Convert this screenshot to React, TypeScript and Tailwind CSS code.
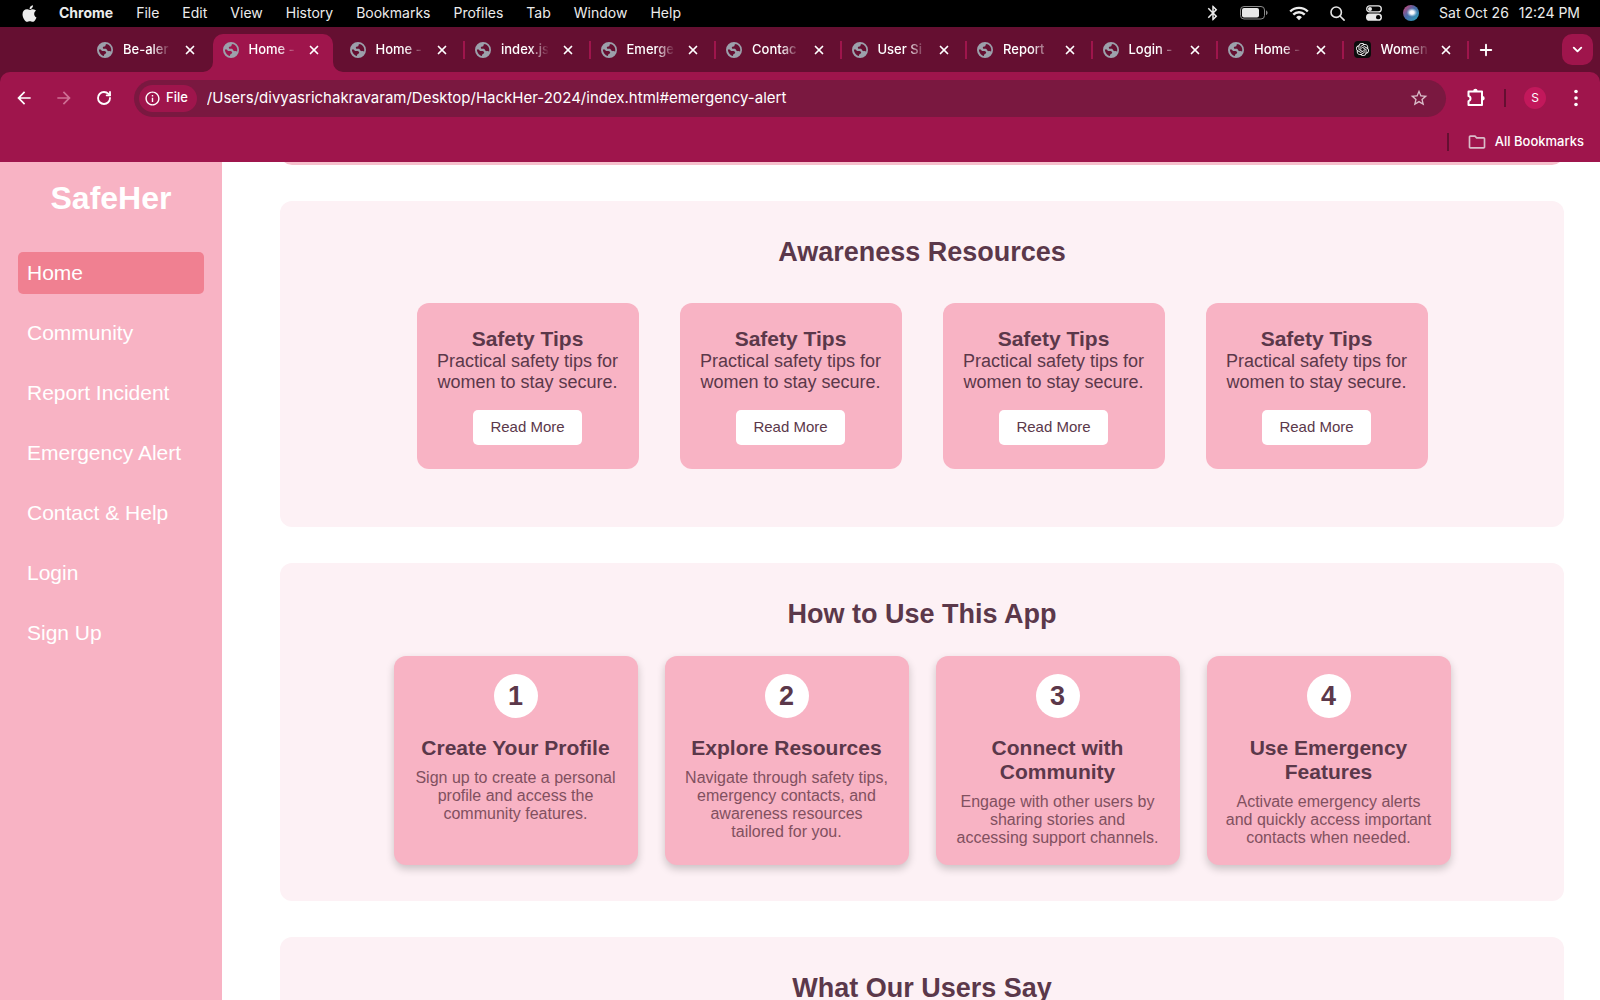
import type { ReactNode } from "react";
import { ChevronDown, Plus, RotateCw, X } from "lucide-react";
import { FaApple } from "react-icons/fa";
import { SiOpenai } from "react-icons/si";
import { MdArrowBack, MdArrowForward, MdBluetooth, MdInfoOutline, MdOutlineFolder, MdStarBorder } from "react-icons/md";

const MENUS = ["File", "Edit", "View", "History", "Bookmarks", "Profiles", "Tab", "Window", "Help"];

const TABS = [
  { title: "Be-aler" },
  { title: "Home -", active: true },
  { title: "Home -" },
  { title: "index.js" },
  { title: "Emerge" },
  { title: "Contac" },
  { title: "User Si" },
  { title: "Report" },
  { title: "Login -" },
  { title: "Home -" },
  { title: "Women", chat: true },
];

const NAV = ["Home", "Community", "Report Incident", "Emergency Alert", "Contact & Help", "Login", "Sign Up"];

const RESOURCES = [1, 2, 3, 4];

const STEPS = [
  {
    title: "Create Your Profile",
    text: "Sign up to create a personal profile and access the community features.",
  },
  {
    title: "Explore Resources",
    text: "Navigate through safety tips, emergency contacts, and awareness resources tailored for you.",
  },
  {
    title: "Connect with Community",
    text: "Engage with other users by sharing stories and accessing support channels.",
  },
  {
    title: "Use Emergency Features",
    text: "Activate emergency alerts and quickly access important contacts when needed.",
  },
];

function BatteryIcon() {
  return (
    <svg width="28" height="14" viewBox="0 0 28 14" fill="none">
      <rect x="0.5" y="0.5" width="24" height="12.5" rx="3.5" stroke="#8a8a8a" />
      <rect x="2" y="2" width="17" height="9.5" rx="2" fill="#e8e8e8" />
      <path d="M26 4.5v4.5c1-.4 1.6-1.2 1.6-2.25S27 4.9 26 4.5z" fill="#8a8a8a" />
    </svg>
  );
}

function WifiIcon() {
  return (
    <svg width="20" height="15" viewBox="0 0 20 15" fill="none" stroke="#ececec" strokeWidth="2.4">
      <path d="M1.2 5.5a12.5 12.5 0 0 1 17.6 0" />
      <path d="M4.3 8.7a8 8 0 0 1 11.4 0" />
      <path d="M10 14.3l-2.9-3a4.1 4.1 0 0 1 5.8 0z" fill="#ececec" stroke="none" />
    </svg>
  );
}

function SpotlightIcon() {
  return (
    <svg width="15" height="15" viewBox="0 0 15 15" fill="none" stroke="#e4e4e4" strokeWidth="1.6" strokeLinecap="round">
      <circle cx="6.2" cy="6.2" r="5.2" />
      <path d="M10.2 10.2l3.9 3.9" />
    </svg>
  );
}

function ControlCenterIcon() {
  return (
    <svg width="16" height="16" viewBox="0 0 16 16" fill="none">
      <rect x="0.7" y="0.9" width="14.6" height="6" rx="3" stroke="#e8e8e8" strokeWidth="1.3" />
      <circle cx="4" cy="3.9" r="2" fill="#e8e8e8" />
      <rect x="0" y="8.5" width="16" height="7.3" rx="3.65" fill="#e8e8e8" />
      <circle cx="12.2" cy="12.15" r="2.2" fill="#000" />
    </svg>
  );
}

function SiriIcon() {
  return (
    <svg width="16" height="16" viewBox="0 0 16 16">
      <defs>
        <linearGradient id="siri" x1="0" y1="0" x2="1" y2="1">
          <stop offset="0" stopColor="#d8406f" />
          <stop offset="0.45" stopColor="#4a6aa8" />
          <stop offset="1" stopColor="#2aa5b8" />
        </linearGradient>
        <radialGradient id="glow">
          <stop offset="0" stopColor="#fff" />
          <stop offset="0.4" stopColor="#fff" stopOpacity="0.9" />
          <stop offset="1" stopColor="#a8d8f0" stopOpacity="0" />
        </radialGradient>
      </defs>
      <circle cx="8" cy="8" r="8" fill="url(#siri)" />
      <ellipse cx="9" cy="7.5" rx="5.5" ry="4.5" fill="url(#glow)" />
    </svg>
  );
}

function GlobeIcon() {
  return (
    <svg width="16" height="16" viewBox="0 0 16 16" className="shrink-0">
      <path
        fill="#9ca0ab"
        fillRule="evenodd"
        d="M8 0a8 8 0 1 1 0 16A8 8 0 0 1 8 0zM1.9 7.6C2 10.800 4.200 13.500 7 14.100c-.1-1 .2-1.700 1-2.100 1.100-.5 1.400-1.200 1-2-.5-.9-1.600-1-2.800-.9C5 9.200 4.600 8.600 4.200 7.900c-.4-.5-1.200-.4-2.300-.3zM9.800 2.100c-.8.1-1.300.6-1.300 1.300 0 .8-.5 1.100-1.400 1.200-1 .1-1.400.6-1.200 1.300.2.8 1 .9 2.100.8 1.200-.1 1.700.4 2 1.300.3.9 1 1.300 1.900 1.100.8-.2 1.400 0 2.200.5C15 6.300 13 3 9.800 2.100z"
      />
    </svg>
  );
}

function PuzzleIcon() {
  return (
    <svg width="20" height="20" viewBox="0 0 20 20">
      <path
        d="M2.500 3.500H16v13.500H2.500v-3.800c1.300-.3 2-1.300 2-2.600s-.7-2.300-2-2.600z"
        fill="none"
        stroke="currentColor"
        strokeWidth="2"
        strokeLinejoin="round"
      />
      <path d="M7.200 3a2.200 2.200 0 0 1 4.400 0zM16.500 8a2.200 2.200 0 0 1 0 4.400z" fill="currentColor" />
    </svg>
  );
}

function DotsIcon() {
  return (
    <svg width="4" height="18" viewBox="0 0 4 18" fill="currentColor">
      <circle cx="2" cy="2.5" r="1.8" />
      <circle cx="2" cy="9" r="1.8" />
      <circle cx="2" cy="15.5" r="1.8" />
    </svg>
  );
}

function MenuBar() {
  return (
    <header className="flex h-[27px] shrink-0 items-center justify-between bg-black pb-px pl-5 pr-5 text-[14px] leading-5 text-[#ececec]">
      <nav className="flex items-center gap-[23px]">
        <div className="flex items-center gap-5">
          <FaApple size={19} />
          <span className="font-bold">Chrome</span>
        </div>
        {MENUS.map((m) => (
          <span key={m}>{m}</span>
        ))}
      </nav>
      <div className="flex items-center">
        <MdBluetooth size={18} />
        <div className="ml-[18px] flex items-center gap-[21px]">
          <BatteryIcon />
          <WifiIcon />
          <SpotlightIcon />
          <ControlCenterIcon />
          <SiriIcon />
        </div>
        <div className="ml-5 flex gap-[10px]">
          <span>Sat Oct 26</span>
          <span>12:24 PM</span>
        </div>
      </div>
    </header>
  );
}

type TabProps = { title: string; active?: boolean; chat?: boolean; divider?: boolean };

function BrowserTab({ title, active, chat, divider }: TabProps) {
  const content = (
    <>
      {chat ? (
        <span className="flex size-[17px] shrink-0 items-center justify-center rounded bg-[#0d0d0d]">
          <SiOpenai size={13} className="text-white" />
        </span>
      ) : (
        <GlobeIcon />
      )}
      <span className="ml-[10px] w-12 shrink-0 whitespace-nowrap text-[13px] font-medium [mask-image:linear-gradient(to_right,black_60%,transparent)]">
        {title}
      </span>
      <button aria-label="Close tab" className="ml-auto">
        <X size={14} strokeWidth={3} />
      </button>
    </>
  );

  if (active) {
    return (
      <div className="relative mr-[7px] flex w-[120px] shrink-0 self-stretch pt-[7px]">
        <div className="flex flex-1 items-center rounded-t-[10px] bg-[#9f154c] pb-[7px] pl-[10px] pr-3">{content}</div>
        {/* flared feet that join the tab to the toolbar */}
        <svg className="absolute -left-[10px] bottom-0" width="10" height="10" fill="#9f154c">
          <path d="M10 0v10H0A10 10 0 0 0 10 0z" />
        </svg>
        <svg className="absolute -right-[10px] bottom-0" width="10" height="10" fill="#9f154c">
          <path d="M0 0v10h10A10 10 0 0 1 0 0z" />
        </svg>
      </div>
    );
  }

  return (
    <div className="flex min-w-0 flex-1 items-center">
      <div className={divider ? "flex min-w-0 flex-1 items-center pl-[10px] pr-[14px]" : "flex min-w-0 flex-1 items-center pl-[10px] pr-4"}>
        {content}
      </div>
      {divider && <span className="h-[18px] w-0.5 shrink-0 bg-[#9f154c]" />}
    </div>
  );
}

function TabStrip() {
  return (
    <div className="flex h-[45px] items-center bg-[#650f31] pl-[87px] pr-[7px]">
      <div className="flex min-w-0 flex-1 items-center self-stretch">
        {TABS.map((tab, i) => (
          <BrowserTab key={i} {...tab} divider={i > 1} />
        ))}
      </div>
      <button aria-label="New tab" className="ml-2">
        <Plus size={18} strokeWidth={2.5} />
      </button>
      <button aria-label="Search tabs" className="ml-[67px] flex size-[31px] items-center justify-center rounded-[10px] bg-[#9f154c]">
        <ChevronDown size={15} strokeWidth={3} />
      </button>
    </div>
  );
}

function Toolbar() {
  return (
    <div className="bg-[#650f31]">
      <div className="rounded-t-[10px] bg-[#9f154c]">
        <div className="flex h-[52px] items-center pl-[14px] pr-[22px]">
          <div className="flex items-center gap-5">
            <button aria-label="Back">
              <MdArrowBack size={20} />
            </button>
            <button aria-label="Forward" className="text-[#cf6f94]">
              <MdArrowForward size={20} />
            </button>
            <button aria-label="Reload" className="px-0.5">
              <RotateCw size={16} strokeWidth={2.75} />
            </button>
          </div>
          <div className="ml-5 flex h-[37px] flex-1 items-center rounded-full bg-[#7a1840] pl-[5px] pr-[17px]">
            <button className="flex h-[27px] items-center gap-[5px] rounded-full bg-[#9f154c] pl-[5px] pr-[9px] text-[13px] font-medium">
              <MdInfoOutline size={17} />
              File
            </button>
            <input
              aria-label="Address"
              readOnly
              value="/Users/divyasrichakravaram/Desktop/HackHer-2024/index.html#emergency-alert"
              className="ml-[10px] flex-1 bg-transparent text-[15px] outline-none"
            />
            <button aria-label="Bookmark this page" className="text-[#d9bcc8]">
              <MdStarBorder size={20} />
            </button>
          </div>
          <button aria-label="Extensions" className="ml-5">
            <PuzzleIcon />
          </button>
          <span className="ml-[18px] h-[18px] w-0.5 bg-[#650f31]" />
          <span className="ml-[18px] flex size-[22px] items-center justify-center rounded-full bg-[#c2185b] text-[12px]">S</span>
          <button aria-label="Menu" className="ml-7">
            <DotsIcon />
          </button>
        </div>
        <div className="flex h-[38px] items-center justify-end pb-0.5 pr-4 text-[13px] font-medium">
          <span className="mr-[18px] h-[18px] w-0.5 bg-[#650f31]" />
          <button className="flex items-center gap-2">
            <MdOutlineFolder size={20} className="text-[#d9bcc8]" />
            All Bookmarks
          </button>
        </div>
      </div>
    </div>
  );
}

function Sidebar() {
  return (
    <aside className="w-[222px] shrink-0 bg-[#f8b3c4] px-[18px] text-white">
      <h1 className="pt-[18px] text-center text-[32px] font-bold leading-9">SafeHer</h1>
      <nav className="mt-9 flex flex-col gap-[18px]">
        {NAV.map((item) => (
          <a
            key={item}
            href="#"
            className={
              item === "Home"
                ? "rounded-[5px] bg-[#f08091] px-[9px] py-[9px] text-[21px] leading-6"
                : "px-[9px] py-[9px] text-[21px] leading-6"
            }
          >
            {item}
          </a>
        ))}
      </nav>
    </aside>
  );
}

function Section({ title, children }: { title: string; children?: ReactNode }) {
  return (
    <section className="rounded-xl bg-[#fdf1f5] px-9 py-9 text-[#5b384a]">
      <h2 className="text-center text-[27px] font-bold leading-[30px]">{title}</h2>
      {children}
    </section>
  );
}

export default function App() {
  return (
    <div className="flex h-screen flex-col overflow-hidden bg-white font-['Inter',sans-serif] text-white">
      <MenuBar />
      <TabStrip />
      <Toolbar />
      <div className="flex min-h-0 flex-1 overflow-hidden font-['Liberation_Sans',Arial,sans-serif]">
        <Sidebar />
        <main className="flex min-w-0 flex-1 flex-col gap-9 pl-[58px] pr-9">
          {/* tail of the section scrolled out above */}
          <div className="-mt-[9px] h-3 shrink-0 rounded-b-xl bg-[#f6c0cc]" />
          <Section title="Awareness Resources">
            <div className="mt-9 mb-[22px] flex justify-center gap-[41px]">
              {RESOURCES.map((id) => (
                <article key={id} className="w-[222px] rounded-xl bg-[#f8b3c4] px-[18px] py-6 text-center">
                  <h3 className="text-[21px] font-bold leading-6">Safety Tips</h3>
                  <p className="text-[18px] leading-[21px]">Practical safety tips for women to stay secure.</p>
                  <button className="mt-[17px] h-[35px] rounded-[5px] bg-white px-[17px] text-[15px]">Read More</button>
                </article>
              ))}
            </div>
          </Section>
          <Section title="How to Use This App">
            <div className="mt-[27px] flex justify-center gap-[27px]">
              {STEPS.map((step, i) => (
                <article
                  key={step.title}
                  className="w-[244px] rounded-xl bg-[#f8b3c4] px-[18px] py-[18px] text-center shadow-[0_4px_8px_rgba(0,0,0,0.2)]"
                >
                  <div className="mx-auto flex size-11 items-center justify-center rounded-full bg-white text-[27px] font-bold">
                    {i + 1}
                  </div>
                  <h3 className="mt-[18px] text-[21px] font-bold leading-6">{step.title}</h3>
                  <p className="mt-[9px] text-[16px] leading-[18px] text-[#81505f]">{step.text}</p>
                </article>
              ))}
            </div>
          </Section>
          <Section title="What Our Users Say" />
        </main>
      </div>
    </div>
  );
}
